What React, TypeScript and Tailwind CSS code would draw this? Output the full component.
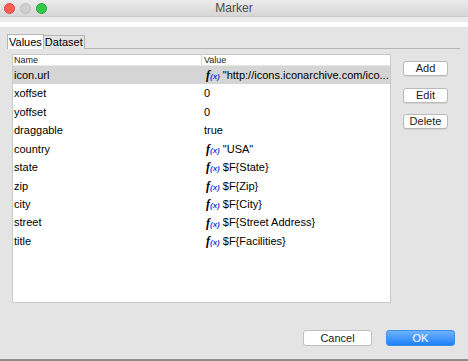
import React from "react";

const Fx = () => (
  <span className="inline-flex items-baseline mr-[3px]">
    <span className="italic font-bold text-[12px] text-black" style={{ fontFamily: "'Liberation Serif', serif" }}>f</span>
    <span className="italic text-[8px] text-[#2a3fd8] font-bold">(x)</span>
  </span>
);

const rows: { name: string; value: string; fx: boolean; selected?: boolean }[] = [
  { name: "icon.url", value: "\"http://icons.iconarchive.com/ico...", fx: true, selected: true },
  { name: "xoffset", value: "0", fx: false },
  { name: "yoffset", value: "0", fx: false },
  { name: "draggable", value: "true", fx: false },
  { name: "country", value: "\"USA\"", fx: true },
  { name: "state", value: "$F{State}", fx: true },
  { name: "zip", value: "$F{Zip}", fx: true },
  { name: "city", value: "$F{City}", fx: true },
  { name: "street", value: "$F{Street Address}", fx: true },
  { name: "title", value: "$F{Facilities}", fx: true },
];

const SideButton = ({ label }: { label: string }) => (
  <div className="w-[45px] h-[15px] bg-white border border-[#b9b9b9] rounded-[3px] flex items-center justify-center text-[11px] text-[#222] shadow-[0_1px_0_rgba(0,0,0,0.08)]">
    {label}
  </div>
);

export default function App() {
  return (
    <div
      className="w-[468px] h-[361px] flex flex-col bg-[#e4e4e4] overflow-hidden"
      style={{ fontFamily: "'Liberation Sans', Arial, sans-serif" }}
    >
      {/* Title bar */}
      <div className="h-[17px] relative flex items-center justify-center bg-gradient-to-b from-[#ececec] to-[#d6d6d6] border-b border-[#c8c8c8]">
        <div className="absolute left-[4px] top-[3px] flex gap-[5px]">
          <div className="w-[11px] h-[11px] rounded-full bg-[#fc5f57] border border-[#e2463f]" />
          <div className="w-[11px] h-[11px] rounded-full bg-[#d0d0d0] border border-[#bdbdbd]" />
          <div className="w-[11px] h-[11px] rounded-full bg-[#34c84a] border border-[#22a834]" />
        </div>
        <span className="text-[12px] text-[#4d4d4d]">Marker</span>
      </div>
      <div className="h-[5px] bg-[#ebebeb]" />
      <div className="h-[5px] bg-white" />

      {/* Tabs */}
      <div className="flex items-end pt-[7px] pl-[7px] pr-[8px]">
        <div className="h-[15px] px-[1px] flex items-center bg-white border border-[#b5b5b5] border-b-0 text-[11px] text-black">
          Values
        </div>
        <div className="h-[14px] px-[1px] flex items-center bg-[#e4e4e4] border border-[#b5b5b5] border-b-0 border-l-0 text-[11px] text-black">
          Dataset
        </div>
        <div className="flex-1 border-b border-[#b5b5b5]" />
      </div>

      {/* Content */}
      <div className="flex pt-[5px]">
        <div className="ml-[12px] w-[379px] h-[249px] bg-white border border-[#c9c9c9] flex flex-col">
          <div className="h-[11px] flex text-[9px] text-[#222] leading-[11px] border-b border-[#e6e6e6]">
            <div className="w-[188px] pl-[1px]">Name</div>
            <div className="flex-1 pl-[2px] border-l border-[#d8d8d8]">Value</div>
          </div>
          {rows.map((r) => (
            <div
              key={r.name}
              className={`h-[18.45px] flex items-center text-[11px] text-black ${r.selected ? "bg-[#d5d5d5]" : ""}`}
            >
              <div className="w-[188px] pl-[1px]">{r.name}</div>
              <div className={`flex-1 flex items-center ${r.fx ? "pl-[5px]" : "pl-[3px]"}`}>
                {r.fx && <Fx />}
                <span>{r.value}</span>
              </div>
            </div>
          ))}
        </div>
        <div className="ml-[12px] flex flex-col pt-[7px]">
          <SideButton label="Add" />
          <div className="h-[12px]" />
          <SideButton label="Edit" />
          <div className="h-[11px]" />
          <SideButton label="Delete" />
        </div>
      </div>

      {/* Bottom buttons */}
      <div className="flex justify-end gap-[14px] pr-[13px] pt-[27px]">
        <div className="w-[69px] h-[16px] bg-white border border-[#c0c0c0] rounded-[3px] flex items-center justify-center text-[11px] text-[#222]">
          Cancel
        </div>
        <div className="w-[69px] h-[16px] rounded-[3px] bg-gradient-to-b from-[#6cb3fa] to-[#1a7ff9] border border-[#3f8ee8] flex items-center justify-center text-[11px] text-white">
          OK
        </div>
      </div>
      <div className="flex-1" />
      <div className="h-[2px] bg-[#8c8c8c]" />
    </div>
  );
}
